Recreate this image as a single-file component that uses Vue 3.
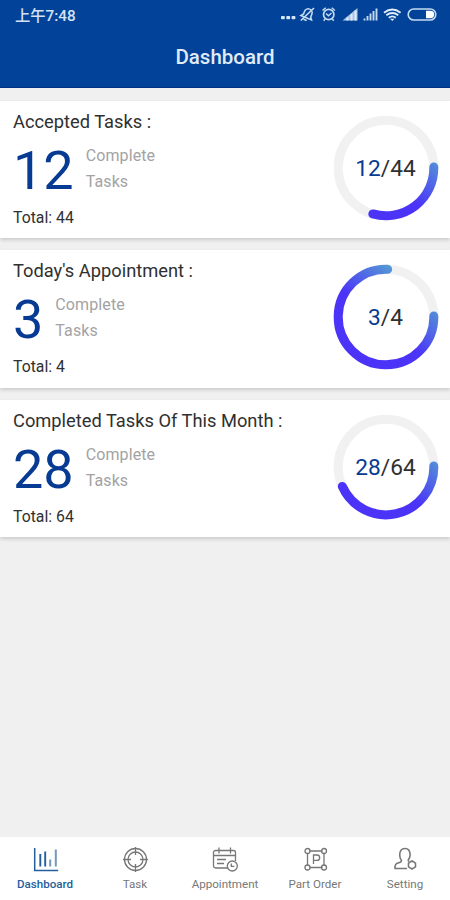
<template>
  <div class="screen">
    <header class="top">
      <div class="status-bar">
        <span class="time">上午7:48</span>
        <svg class="status-icons" width="160" height="20" viewBox="0 0 160 20" fill="none" stroke="#c3daf3" stroke-width="1.5">
          <g fill="#d5e6f8" stroke="none">
            <rect x="1" y="12" width="3.8" height="3.2" rx="0.8" />
            <rect x="6.3" y="12" width="3.8" height="3.2" rx="0.8" />
            <rect x="11.6" y="12" width="3.8" height="3.2" rx="0.8" />
          </g>
          <g transform="rotate(22 27.500 10.500)">
            <path d="M21.800 14h11.400l-1.800-2.400V8.600a3.900 3.900 0 0 0-7.800 0v3zM25.500 16.400h3.500" stroke-width="1.600" />
          </g>
          <path d="M20.800 16.500L34 4" stroke-width="1.700" />
          <circle cx="48.700" cy="10.500" r="5.200" stroke-width="1.700" />
          <path d="M46 9.500l2.500 2.200 3-2.700M42.500 6.500l3.200-2.700M54.900 6.500l-3.200-2.700M45 15l-1.300 1.700M52.400 15l1.300 1.700" />
          <path d="M62.500 16.500L77.500 4V16.500z" fill="#a9c6e6" stroke="none" />
          <path d="M67.500 16.500v-3M71.500 16.500V10M75.500 16.500V6.500" stroke="#dceafa" stroke-width="2" />
          <path d="M84.500 16.500v-2M87.500 16.500v-4.500M90.500 16.500V9.500M93.500 16.500V7M96.500 16.500V4.500" stroke-width="1.900" />
          <path d="M104 8.700q8.300-6.500 16.600 0M106.300 11.300q6-4.500 12 0M108.800 13.700q3.500-2.600 7 0" stroke="#e0edfb" stroke-width="1.900" />
          <path d="M112.300 17l-2.200-2.200h4.400z" fill="#e0edfb" stroke="none" />
          <rect x="128.200" y="5" width="27.600" height="11" rx="5.500" stroke-width="1.600" />
          <path d="M146 6.800h4.500a3.700 3.700 0 0 1 0 7.400H146z" fill="#fff" stroke="none" />
        </svg>
      </div>
      <h1>Dashboard</h1>
    </header>

    <main class="cards">
      <section v-for="card in cards" :key="card.title" class="card">
        <div class="info">
          <h2>{{ card.title }}</h2>
          <div class="count-row">
            <span class="count">{{ card.done }}</span>
            <p class="caption">Complete<br />Tasks</p>
          </div>
          <p class="total">Total: {{ card.total }}</p>
        </div>
        <div class="ring">
          <svg width="106" height="106" viewBox="-53 -53 106 106" fill="none" stroke-width="9">
            <defs>
              <linearGradient id="ringFill" gradientUnits="userSpaceOnUse" x1="44" y1="-20" x2="11" y2="20">
                <stop offset="0" stop-color="#559cd4" />
                <stop offset="1" stop-color="#4b33f8" />
              </linearGradient>
            </defs>
            <circle r="47.800" stroke="#f1f1f2" />
            <path :d="arc(card.sweep)" stroke="url(#ringFill)" stroke-linecap="round" />
          </svg>
          <span class="ratio"><b>{{ card.done }}</b>/{{ card.total }}</span>
        </div>
      </section>
    </main>

    <nav class="tabs">
      <a v-for="tab in tabs" :key="tab.name" class="tab" :class="{ active: tab.name === current }" @click="current = tab.name">
        <svg width="28" height="28" viewBox="0 0 28 28" fill="none" stroke="currentColor" stroke-width="1.300">
          <template v-if="tab.icon === 'chart'">
            <path d="M3.700 2v22.500h23.500" stroke-width="1.500" />
            <path d="M9.300 8v12.500M14.200 5.500v15" stroke-width="1.900" />
            <path d="M19.200 13.500v7M24.800 3.500v17" stroke="#7399bd" stroke-width="2" />
          </template>
          <template v-else-if="tab.icon === 'target'">
            <circle cx="14.500" cy="13.500" r="11" />
            <circle cx="14.500" cy="13.500" r="7.500" />
            <path d="M14.500 1v8M14.500 18v8M2 13.500h8M19 13.500h8" />
          </template>
          <template v-else-if="tab.icon === 'calendar'">
            <path d="M17 22H4.500a2 2 0 0 1-2-2V6.500a2 2 0 0 1 2-2h18a2 2 0 0 1 2 2V15M2.500 9.500h22M8 1.500v6M19.500 1.500v6M6 13.500h9M6 17.500h7" />
            <circle cx="21.300" cy="20" r="5" />
            <path d="M20.300 17.500v2.800h3" />
          </template>
          <template v-else-if="tab.icon === 'part'">
            <path d="M8.500 5h13M8.500 21.500h13M6.500 7v12.500M23 7v12.500" />
            <circle cx="6.500" cy="5" r="2.500" />
            <circle cx="23" cy="5" r="2.500" />
            <circle cx="6.500" cy="21.500" r="2.500" />
            <circle cx="23" cy="21.500" r="2.500" />
            <path d="M12.500 18V9h3.500a2.700 2.700 0 0 1 0 5.400h-3.500" />
          </template>
          <template v-else>
            <path d="M16 22.500H4q-.5-4.500 3-5.500 3.500-.9 3.500-2.500-1.800-2-1.800-5.500 0-6.500 5.200-6.500t5.200 6.500q0 3-1.900 5 0 1 .8 1.500" stroke-width="1.600" />
            <circle cx="21" cy="19" r="3.600" stroke-width="1.600" />
            <path d="M21 14.200v1.300M21 22.500v1.300M16.800 16.700l1.200.7M24 20.600l1.200.7M16.800 21.300l1.200-.7M24 17.400l1.200-.7" />
          </template>
        </svg>
        <span>{{ tab.name }}</span>
      </a>
    </nav>
  </div>
</template>

<script setup>
import { ref } from 'vue'

const cards = [
  { title: 'Accepted Tasks :', done: 12, total: 44, sweep: 106 },
  { title: "Today's Appointment :", done: 3, total: 4, sweep: 272 },
  { title: 'Completed Tasks Of This Month :', done: 28, total: 64, sweep: 156 }
]

const tabs = [
  { name: 'Dashboard', icon: 'chart' },
  { name: 'Task', icon: 'target' },
  { name: 'Appointment', icon: 'calendar' },
  { name: 'Part Order', icon: 'part' },
  { name: 'Setting', icon: 'user' }
]

const current = ref('Dashboard')

// clockwise from three o'clock
const arc = (deg) => {
  const r = 47.8
  const a = (deg * Math.PI) / 180
  const large = deg > 180 ? 1 : 0
  return `M${r} -1A${r} ${r} 0 ${large} 1 ${r * Math.cos(a)} ${r * Math.sin(a)}`
}
</script>

<style>
body {
  margin: 0;
}
</style>

<style scoped>
.screen {
  display: flex;
  flex-direction: column;
  width: 450px;
  height: 900px;
  background: #f0f0f0;
  font-family: Roboto, "Noto Sans CJK SC", sans-serif;
  color: #303030;
  overflow: hidden;
}

h1, h2, p {
  margin: 0;
  font-weight: 400;
}

.top {
  height: 88px;
  box-sizing: border-box;
  background: #024298;
  border-bottom: 1px solid #02317f;
}

.status-bar {
  display: flex;
  justify-content: space-between;
  align-items: center;
  height: 30px;
  padding: 0 10px 0 15px;
}

.time {
  margin-top: -2px;
  color: #d3e3f5;
  font-size: 15.3px;
  font-weight: 500;
}

.status-icons {
  margin-top: -2px;
}

.top h1 {
  color: #e0ebf8;
  font-size: 20.5px;
  font-weight: 500;
  line-height: 28px;
  padding-top: 13px;
  text-align: center;
}

.cards {
  flex: 1;
  display: flex;
  flex-direction: column;
  gap: 12px;
  padding-top: 13px;
}

.card {
  display: flex;
  justify-content: space-between;
  height: 137.3px;
  box-sizing: border-box;
  padding: 10px 11.5px 0 13px;
  background: #fff;
  box-shadow: 0 2px 4px rgba(0, 0, 0, 0.16);
}

h2 {
  font-size: 18.3px;
  line-height: 22px;
}

.count-row {
  display: flex;
  gap: 12px;
  height: 75px;
}

.count {
  color: #073b93;
  font-size: 54px;
  line-height: 75px;
}

.caption {
  padding-top: 10px;
  color: #a3a3a3;
  font-size: 16px;
  line-height: 26px;
  letter-spacing: 0.1px;
}

.total {
  font-size: 15.8px;
  line-height: 20px;
}

.ring {
  display: grid;
  place-items: center;
  width: 106px;
  height: 106px;
  margin-top: 4px;
}

.ring > * {
  grid-area: 1 / 1;
}

.ratio {
  padding-top: 1px;
  font-size: 22.7px;
}

.ratio b {
  color: #073b93;
  font-weight: 400;
}

.tabs {
  display: flex;
  height: 63px;
  background: #fff;
}

.tab {
  flex: 1;
  display: flex;
  flex-direction: column;
  align-items: center;
  padding-top: 9px;
  color: #777;
  font-size: 11.6px;
  line-height: 21px;
}

.tab.active {
  color: #245f9b;
}

.tab.active span {
  font-weight: 500;
}
</style>
